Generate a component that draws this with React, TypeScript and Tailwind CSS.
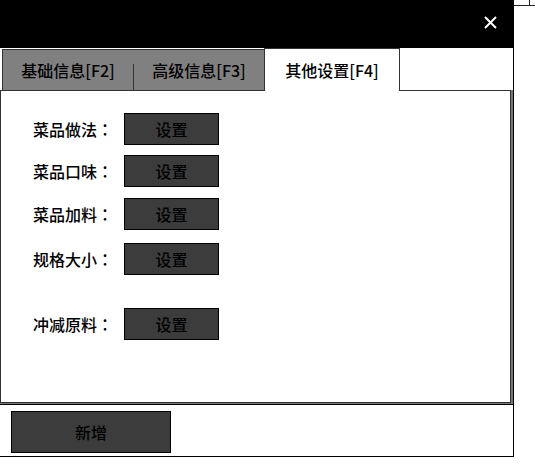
import React from "react"

const rows = [
  { label: "菜品做法", gap: "mt-0" },
  { label: "菜品口味", gap: "mt-[10px]" },
  { label: "菜品加料", gap: "mt-[11px]" },
  { label: "规格大小", gap: "mt-[13px]" },
  { label: "冲减原料", gap: "mt-[33px]" },
]

function CloseIcon() {
  return (
    <svg width="13" height="13" viewBox="0 0 13 13" fill="none">
      <path d="M1 1 12 12M12 1 1 12" stroke="white" strokeWidth="2" />
    </svg>
  )
}

export default function App() {
  return (
    <div className="flex h-[466px] w-[535px] bg-white font-['Noto_Sans_CJK_SC',sans-serif] font-medium text-black">
      <div className="flex h-[457px] w-[514px] flex-col border-r border-b border-black">
        {/* title bar */}
        <div className="flex h-[48px] shrink-0 items-start justify-end bg-black pt-[16px] pr-[16px]">
          <CloseIcon />
        </div>

        {/* tabs */}
        <div className="flex h-[42px] shrink-0 items-end pl-[2px]">
          <div className="flex h-[41px] border-t border-r border-l border-[#333] bg-[#808080]">
            <div className="flex w-[130px] items-center justify-center text-[16px] leading-none">基础信息[F2]</div>
            <div className="mt-[14px] w-px self-stretch bg-[#333]" />
            <div className="flex w-[130px] items-center justify-center text-[16px] leading-none">高级信息[F3]</div>
          </div>
          <div className="relative z-10 -mb-px -ml-px flex h-[43px] w-[136px] items-center justify-center border-t border-r border-l border-[#333] bg-white text-[16px] leading-none">
            其他设置[F4]
          </div>
        </div>

        {/* settings panel */}
        <div className="flex flex-1 flex-col border-b border-black">
          <div className="flex flex-1 flex-col border-r-2 border-b border-[#777]">
            <div className="flex flex-1 flex-col border border-[#333] pt-[22px] pl-[32px]">
              {rows.map((row) => (
                <div key={row.label} className={`flex h-[32px] items-center ${row.gap}`}>
                  <div className="w-[91px] text-[16px] leading-none">
                    {row.label}
                    <span className="font-['Noto_Sans_CJK_TC',sans-serif]">：</span>
                  </div>
                  <button className="flex h-[32px] w-[95px] items-center justify-center border border-black bg-[#3c3c3c] text-[16px] leading-none text-black">
                    设置
                  </button>
                </div>
              ))}
            </div>
          </div>
        </div>

        {/* footer */}
        <div className="h-[51px] shrink-0 pt-[6px] pl-[11px]">
          <button className="flex h-[42px] w-[160px] items-center justify-center border border-black bg-[#3c3c3c] text-[16px] leading-none text-black">
            新增
          </button>
        </div>
      </div>

      <div className="flex-1">
        <div className="h-[6px] border-b border-[#222] pl-[15px]">
          <div className="h-[5px] w-px bg-[#222]" />
        </div>
      </div>
    </div>
  )
}
